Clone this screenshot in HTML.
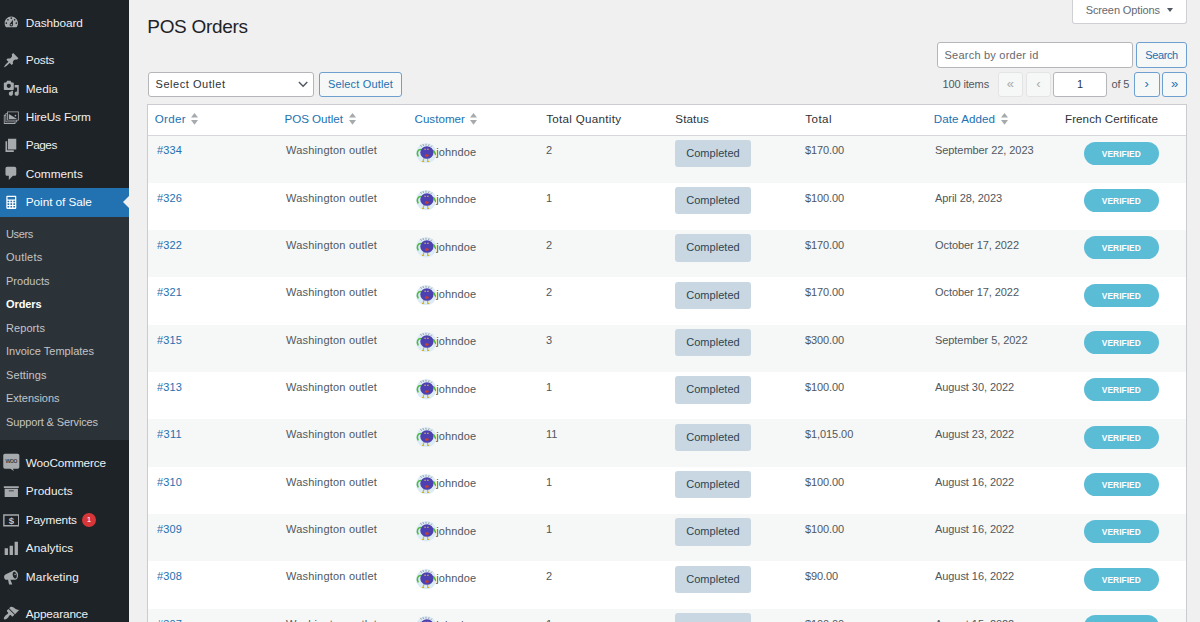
<!DOCTYPE html>
<html lang="en">
<head>
<meta charset="utf-8">
<title>POS Orders</title>
<style>
*{box-sizing:border-box;margin:0;padding:0}
html,body{width:1200px;height:622px;overflow:hidden}
body{background:#f0f0f1;font-family:"Liberation Sans",sans-serif;color:#3c434a;font-size:11px;position:relative}
a{text-decoration:none}
/* sidebar */
#side{position:absolute;left:0;top:0;width:129px;height:622px;background:#1d2327}
.mi{position:absolute;left:0;width:129px;height:28px;color:#f0f0f1;line-height:28px;white-space:nowrap}
.mi span{position:absolute;left:25.8px;top:.2px}
.mi svg{position:absolute;left:3.2px;top:5.8px;width:16.6px;height:16.6px;fill:#a7aaad}
.mi.act{background:#2271b1;color:#fff;height:28.8px}
.mi.act svg{fill:#fff}
.mi.act:after{content:"";position:absolute;right:0;top:8.1px;border:6.9px solid transparent;border-right-color:#f0f0f1;border-left-width:0}
#sub{position:absolute;left:0;top:216.5px;width:129px;height:223.5px;background:#2c3338}
.si{position:absolute;left:6px;color:#c3c4c7;line-height:14px;white-space:nowrap}
.si.cur{color:#fff;font-weight:bold}
.badge{position:absolute;left:82px;top:7px;width:14px;height:14px;border-radius:7px;background:#d63638;color:#fff;font-size:8px;font-weight:normal;line-height:14px;text-align:center}
/* content header */
h1{position:absolute;left:147.3px;top:13.9px;font-size:19px;font-weight:normal;color:#1d2327;line-height:26px;white-space:nowrap}
#scr{position:absolute;left:1072px;top:-1px;width:115px;height:24.5px;background:#fff;border:1px solid #cfd0d4;border-top:none;border-radius:0 0 3px 3px;color:#646970;font-size:11px;line-height:22.4px;white-space:nowrap}
#scr span{position:absolute;left:12.7px;top:0}
#scr i{position:absolute;left:93.6px;top:9px;border:3.5px solid transparent;border-top:4.8px solid #50575e;border-bottom:0}
.inp{position:absolute;background:#fff;border:1px solid #b4b6ba;border-radius:3px;font-size:11px;color:#2c3338;white-space:nowrap}
.btn{position:absolute;background:#f6f7f7;border:1px solid #6da0cf;border-radius:3px;color:#2271b1;font-size:11px;text-align:center;white-space:nowrap}
.lbl{position:absolute;font-size:11px;line-height:25px;color:#50575e;white-space:nowrap}
.pg{position:absolute;top:72px;height:25px;border-radius:3px;font-size:13px;text-align:center;line-height:21px}
.pg.dis{background:#f6f7f7;border:1px solid #e4e4e6;color:#a7aaad}
.pg.en{background:#f6f7f7;border:1px solid #6da0cf;color:#2271b1}
/* table */
#tbl{position:absolute;left:147.2px;top:104px;width:1039.8px;height:540px;background:#fff;border:1px solid #cbccd0;box-shadow:0 1px 1px rgba(0,0,0,.04)}
#thead{position:absolute;left:0;top:0;width:1037.8px;height:31px;border-bottom:1px solid #d6d7da;z-index:2}
.th{position:absolute;top:.4px;line-height:28px;color:#2c3338;white-space:nowrap}
.th.s{color:#2271b1}
.sa{position:absolute;top:8.4px;fill:#a7aaad}
.row{position:absolute;left:0;width:1037.8px;height:47.4px}
.row.alt{background:#f6f7f7}
.c{position:absolute;top:7px;line-height:16px;white-space:nowrap;color:#50575e}
.c.o{color:#2271b1}
.av{position:absolute;top:7.4px;width:20.4px;height:20.4px}
.av svg{display:block;width:20.4px;height:20.4px}
.st{position:absolute;top:4.3px;width:76px;height:27.3px;border-radius:3px;background:#c8d7e1;color:#2e4453;font-size:11px;line-height:27px;text-align:center;white-space:nowrap}
.vf{position:absolute;top:6.4px;width:75.3px;height:23.1px;border-radius:12px;background:#5bbcd6;color:#fff;font-size:8.4px;font-weight:bold;line-height:24.4px;text-align:center;letter-spacing:.05px;white-space:nowrap}
</style>
</head>
<body>
<div id="side">
<div class="mi" style="top:8.4px"><svg viewBox="0 0 20 20"><path d="M3.76 16h12.48c1.1-1.37 1.76-3.11 1.76-5 0-4.42-3.58-8-8-8s-8 3.58-8 8c0 1.89.66 3.63 1.76 5zM10 4c.55 0 1 .45 1 1s-.45 1-1 1-1-.45-1-1 .45-1 1-1zM6 6c.55 0 1 .45 1 1s-.45 1-1 1-1-.45-1-1 .45-1 1-1zm8 0c.55 0 1 .45 1 1s-.45 1-1 1-1-.45-1-1 .45-1 1-1zm-5.37 5.55L12 7v6c0 1.1-.9 2-2 2s-2-.9-2-2c0-.57.24-1.08.63-1.45zM4 10c.55 0 1 .45 1 1s-.45 1-1 1-1-.45-1-1 .45-1 1-1zm12 0c.55 0 1 .45 1 1s-.45 1-1 1-1-.45-1-1 .45-1 1-1zm-5 3c0-.55-.45-1-1-1s-1 .45-1 1 .45 1 1 1 1-.45 1-1z"/></svg><span style="font-size:11.8px;letter-spacing:-0.081px">Dashboard</span></div>
<div class="mi" style="top:46.3px"><svg viewBox="0 0 20 20"><path d="M10.44 3.02l1.82-1.82 6.36 6.35-1.83 1.82c-1.05-.68-2.48-.57-3.41.36l-.75.75c-.92.93-1.04 2.35-.35 3.41l-1.83 1.82-2.41-2.41-2.8 2.79c-.42.42-3.38 2.71-3.8 2.29s1.86-3.39 2.28-3.81l2.79-2.79L4.1 9.36l1.83-1.82c1.05.69 2.48.57 3.4-.36l.75-.75c.93-.92 1.05-2.35.36-3.41z"/></svg><span style="font-size:11.8px;letter-spacing:-0.202px">Posts</span></div>
<div class="mi" style="top:74.6px"><svg viewBox="0 0 20 20"><path d="M13 11V4c0-.55-.45-1-1-1h-1.67L9 1H5L3.67 3H2c-.55 0-1 .45-1 1v7c0 .55.45 1 1 1h10c.55 0 1-.45 1-1zM7 4.5c1.38 0 2.5 1.12 2.5 2.5S8.38 9.5 7 9.5 4.5 8.38 4.5 7 5.62 4.5 7 4.5zM14 6h5v10.5c0 1.38-1.12 2.5-2.5 2.5S14 17.88 14 16.5s1.12-2.5 2.5-2.5c.17 0 .34.02.5.05V9h-3V6zm-4 8.05V13h2v3.5c0 1.38-1.12 2.5-2.5 2.5S7 17.88 7 16.5 8.12 14 9.5 14c.17 0 .34.02.5.05z"/></svg><span style="font-size:11.8px;letter-spacing:-0.028px">Media</span></div>
<div class="mi" style="top:102.9px"><svg viewBox="0 0 20 20"><path d="M5 3h14v11h-2v2h-2v2H1V7h2V5h2V3zm13 10V4H6v9h12zm-3-4c-.55 0-1-.45-1-1s.45-1 1-1 1 .45 1 1-.45 1-1 1zm1 6v-1H5V6H4v9h12zM7 6l10 6H7V6zm7 11v-1H3V8H2v9h12z"/></svg><span style="font-size:11.8px;letter-spacing:-0.170px">HireUs Form</span></div>
<div class="mi" style="top:131.3px"><svg viewBox="0 0 20 20"><path d="M6 15V2h10v13H6zm-1 1h8v2H3V5h2v11z"/></svg><span style="font-size:11.8px;letter-spacing:-0.492px">Pages</span></div>
<div class="mi" style="top:159.6px"><svg viewBox="0 0 20 20"><path d="M5 2h9c1.1 0 2 .9 2 2v7c0 1.1-.9 2-2 2h-2l-5 5v-5H5c-1.1 0-2-.9-2-2V4c0-1.1.9-2 2-2z"/></svg><span style="font-size:11.8px;letter-spacing:-0.006px">Comments</span></div>
<div class="mi act" style="top:187.8px"><svg viewBox="0 0 20 20"><path fill-rule="evenodd" d="M5 2h10a1 1 0 0 1 1 1v14a1 1 0 0 1-1 1H5a1 1 0 0 1-1-1V3a1 1 0 0 1 1-1zM5.5 3.5v3h9v-3zM5.5 8v2h2V8zM9 8v2h2V8zM12.5 8v2h2V8zM5.500 11.200v2h2v-2zM9 11.200v2h2v-2zM12.500 11.200v2h2v-2zM5.500 14.400v2h2v-2zM9 14.400v2h2v-2zM12.500 14.400v2h2v-2z"/></svg><span style="font-size:11.8px;letter-spacing:-0.070px">Point of Sale</span></div>
<div class="mi" style="top:448.8px"><svg viewBox="0 0 20 20" style="top:4.300px;overflow:visible"><path d="M2.300.800h15.400a2 2 0 0 1 2 2v14.200a2 2 0 0 1-2 2H12l1.200 2.600-4.300-2.600H2.300a2 2 0 0 1-2-2V2.800a2 2 0 0 1 2-2z"/><text x="10" y="12.600" text-anchor="middle" font-family="Liberation Sans" font-size="8.400" fill="#1d2327" letter-spacing="-.45">woo</text></svg><span style="font-size:11.8px;letter-spacing:-0.141px">WooCommerce</span></div>
<div class="mi" style="top:477.2px"><svg viewBox="0 0 20 20"><path d="M19 4v2H1V4h18zM2 7h16v10H2V7zm11 3V9H7v1h6z"/></svg><span style="font-size:11.8px;letter-spacing:0.054px">Products</span></div>
<div class="mi" style="top:505.6px"><svg viewBox="0 0 20 20" style="top:6.300px;left:2.800px"><path fill-rule="evenodd" d="M.200 2.700h19.600v14.800H.200zM1.900 4.400v11.400h16.200V4.400z"/><text x="10" y="14.200" text-anchor="middle" font-family="Liberation Sans" font-weight="bold" font-size="11.500" fill="#c3c5c7">$</text></svg><span style="font-size:11.8px;letter-spacing:-0.183px">Payments</span><b class="badge">1</b></div>
<div class="mi" style="top:534.0px"><svg viewBox="0 0 20 20"><path d="M18 18V2h-4v16h4zm-6 0V7H8v11h4zm-6 0v-8H2v8h4z"/></svg><span style="font-size:11.8px;letter-spacing:0.031px">Analytics</span></div>
<div class="mi" style="top:562.4px"><svg viewBox="0 0 20 20" style="top:6.400px"><path fill-rule="evenodd" d="M13.500 1.600c2.500 0 4.700 2.800 4.700 6s-1.600 5.500-3.800 5.500H8.900l2.300 5.700H7.300l-1.200-5.700H4.300c-1.600 0-3-1.600-3-3.600 0-1.400.600-2.500 1.600-3l9.300-4.400c.600-.3 1.300-.5 1.300-.5zM13.300 3.200c-1.300.300-1.900 2.400-1.500 4.600.500 2.400 2 4 3.300 3.700 1.300-.3 1.900-2.400 1.400-4.600-.4-2.300-1.900-4-3.200-3.700zM13.600 5.900l1.500-.4.400 1.600-1.500.4z"/></svg><span style="font-size:11.8px;letter-spacing:0.154px">Marketing</span></div>
<div class="mi" style="top:599.6px"><svg viewBox="0 0 20 20"><path d="M14.480 11.060L7.410 3.990l1.500-1.500c.5-.56 2.300-.47 3.510.32 1.210.8 1.430 1.280 2.910 2.100 1.180.64 2.450 1.260 4.450.85zm-.71.71L6.700 4.700 4.930 6.470c-.39.39-.39 1.020 0 1.410l1.060 1.060c.39.39.39 1.030 0 1.420-.6.6-1.430 1.110-2.210 1.690-.35.26-.7.530-1.010.84C1.430 14.230.4 16.080 1.400 17.070c.99 1 2.840-.03 4.180-1.360.31-.31.58-.66.850-1.020.57-.78 1.080-1.610 1.690-2.210.39-.39 1.020-.39 1.410 0l1.060 1.060c.39.39 1.020.39 1.410 0z"/></svg><span style="font-size:11.8px;letter-spacing:-0.144px">Appearance</span></div>
<div id="sub">
<a class="si" style="top:10.0px;font-size:11px;letter-spacing:-0.345px">Users</a>
<a class="si" style="top:33.5px;font-size:11px;letter-spacing:0.236px">Outlets</a>
<a class="si" style="top:57.0px;font-size:11px;letter-spacing:0.011px">Products</a>
<a class="si cur" style="top:80.5px;font-size:11px;letter-spacing:-0.095px">Orders</a>
<a class="si" style="top:104.0px;font-size:11px;letter-spacing:0.069px">Reports</a>
<a class="si" style="top:127.5px;font-size:11px;letter-spacing:0.009px">Invoice Templates</a>
<a class="si" style="top:151.0px;font-size:11px;letter-spacing:0.094px">Settings</a>
<a class="si" style="top:174.5px;font-size:11px;letter-spacing:-0.031px">Extensions</a>
<a class="si" style="top:198.0px;font-size:11px;letter-spacing:-0.120px">Support &amp; Services</a>
</div>
</div>
<div id="main">
<h1 style="letter-spacing:-0.317px">POS Orders</h1>
<div id="scr"><span style="letter-spacing:-0.108px">Screen Options</span><i></i></div>
<div class="inp" style="left:937px;top:42px;width:195.5px;height:25.5px;line-height:25.2px;color:#646970"><span style="position:absolute;left:6.5px;letter-spacing:0.229px">Search by order id</span></div>
<div class="btn" style="left:1136px;top:42px;width:51px;height:25.5px;line-height:24px"><span style="letter-spacing:-0.426px">Search</span></div>
<div class="inp" style="left:148px;top:72px;width:165.900px;height:24.700px;line-height:23.300px"><span style="position:absolute;left:6.5px;letter-spacing:0.540px">Select Outlet</span><svg style="position:absolute;left:148.600px;top:7.900px" width="10" height="7" viewBox="0 0 10 7"><path d="M.900 1 L5.100 5.300 L9.300 1" fill="none" stroke="#50575e" stroke-width="1.400"/></svg></div>
<div class="btn" style="left:319px;top:72px;width:83px;height:24.5px;line-height:22px"><span style="letter-spacing:0.156px">Select Outlet</span></div>
<span class="lbl" style="left:942.5px;top:72px;letter-spacing:-0.132px">100 items</span>
<span class="pg dis" style="left:998.2px;width:24.6px">&laquo;</span>
<span class="pg dis" style="left:1026.3px;width:24.3px">&lsaquo;</span>
<div class="inp" style="left:1053px;top:72px;width:54px;height:25px;line-height:23px;text-align:center">1</div>
<span class="lbl" style="left:1111.5px;top:72px;letter-spacing:-0.137px">of 5</span>
<span class="pg en" style="left:1134px;width:25.5px">&rsaquo;</span>
<span class="pg en" style="left:1162px;width:25px">&raquo;</span>
<div id="tbl">
<div id="thead">
<span class="th s" style="left:6.6px;font-size:11.6px;letter-spacing:0.310px;">Order</span><svg class="sa" style="left:42.5px" width="7" height="12" viewBox="0 0 7 12"><path d="M3.5 0 L7 4.6 L0 4.6Z M0 7.1 L7 7.1 L3.5 11.7Z"/></svg>
<span class="th s" style="left:136.3px;font-size:11.6px;letter-spacing:-0.017px;">POS Outlet</span><svg class="sa" style="left:200.8px" width="7" height="12" viewBox="0 0 7 12"><path d="M3.5 0 L7 4.6 L0 4.6Z M0 7.1 L7 7.1 L3.5 11.7Z"/></svg>
<span class="th s" style="left:266.3px;font-size:11.6px;letter-spacing:0.027px;">Customer</span><svg class="sa" style="left:321.8px" width="7" height="12" viewBox="0 0 7 12"><path d="M3.5 0 L7 4.6 L0 4.6Z M0 7.1 L7 7.1 L3.5 11.7Z"/></svg>
<span class="th" style="left:398.1px;font-size:11.6px;letter-spacing:0.291px;">Total Quantity</span>
<span class="th" style="left:527.1px;font-size:11.6px;letter-spacing:0.136px;">Status</span>
<span class="th" style="left:657.1px;font-size:11.6px;letter-spacing:0.439px;">Total</span>
<span class="th s" style="left:785.6px;font-size:11.6px;letter-spacing:0.057px;">Date Added</span><svg class="sa" style="left:852.5px" width="7" height="12" viewBox="0 0 7 12"><path d="M3.5 0 L7 4.6 L0 4.6Z M0 7.1 L7 7.1 L3.5 11.7Z"/></svg>
<span class="th" style="left:916.8px;font-size:11.6px;letter-spacing:0.081px;">French Certificate</span>
</div>
<div class="row alt" style="top:30.3px"><span class="c o" style="left:8.8px;font-size:11px;letter-spacing:0.132px;">#334</span><span class="c" style="left:137.8px;font-size:11px;letter-spacing:0.197px;">Washington outlet</span><span class="av" style="left:267.5px"><svg viewBox="0 0 20 20"><circle cx="10" cy="10" r="10" fill="#dcecf6"/><path d="M4.400 6.400C1.400 6.600.600 9.800 2 12.600" fill="none" stroke="#4cba3c" stroke-width="1.500" stroke-linecap="round"/><path d="M17 7.600c1.800.4.800 3 2.600 3.600" fill="none" stroke="#4cba3c" stroke-width="1.500" stroke-linecap="round"/><path d="M7.600 15l-.6 3M11.200 15l.5 3" stroke="#d0b42c" stroke-width="1.200" fill="none"/><path d="M5.800 18.100h2.200M10.800 18.100h2.200" stroke="#d0b42c" stroke-width="1" fill="none"/><path d="M5.500 3.600L4.300 1.800M7.400 2.900L6.800 1M9.800 2.600V.800M12.200 2.900l.7-1.700M14.400 3.900l1.300-1.400" stroke="#666" stroke-width=".55" fill="none"/><ellipse cx="10.700" cy="9.300" rx="6.500" ry="6.200" fill="#4d40b0"/><rect x="8.200" y="5.600" width="1.500" height="1.100" fill="#cdb95c"/><rect x="10.900" y="5.600" width="1.500" height="1.100" fill="#cdb95c"/><ellipse cx="10.600" cy="12.200" rx="1.800" ry="1.200" fill="#c8402c"/></svg></span><span class="c" style="left:288.1px;font-size:11px;letter-spacing:0.121px;top:8.8px;">johndoe</span><span class="c" style="left:397.8px;font-size:11px;letter-spacing:-0.418px;">2</span><span class="st" style="left:526.8px;letter-spacing:0.034px">Completed</span><span class="c" style="left:656.8px;font-size:11px;letter-spacing:-0.085px;">$170.00</span><span class="c" style="left:786.8px;font-size:11px;letter-spacing:-0.066px;">September 22, 2023</span><span class="vf" style="left:935.5px">VERIFIED</span></div>
<div class="row" style="top:77.7px"><span class="c o" style="left:8.8px;font-size:11px;letter-spacing:0.132px;">#326</span><span class="c" style="left:137.8px;font-size:11px;letter-spacing:0.197px;">Washington outlet</span><span class="av" style="left:267.5px"><svg viewBox="0 0 20 20"><circle cx="10" cy="10" r="10" fill="#dcecf6"/><path d="M4.400 6.400C1.400 6.600.600 9.800 2 12.600" fill="none" stroke="#4cba3c" stroke-width="1.500" stroke-linecap="round"/><path d="M17 7.600c1.800.4.800 3 2.600 3.600" fill="none" stroke="#4cba3c" stroke-width="1.500" stroke-linecap="round"/><path d="M7.600 15l-.6 3M11.200 15l.5 3" stroke="#d0b42c" stroke-width="1.200" fill="none"/><path d="M5.800 18.100h2.200M10.800 18.100h2.200" stroke="#d0b42c" stroke-width="1" fill="none"/><path d="M5.500 3.600L4.300 1.800M7.400 2.900L6.800 1M9.800 2.600V.800M12.200 2.900l.7-1.700M14.400 3.900l1.300-1.400" stroke="#666" stroke-width=".55" fill="none"/><ellipse cx="10.700" cy="9.300" rx="6.500" ry="6.200" fill="#4d40b0"/><rect x="8.200" y="5.600" width="1.500" height="1.100" fill="#cdb95c"/><rect x="10.900" y="5.600" width="1.500" height="1.100" fill="#cdb95c"/><ellipse cx="10.600" cy="12.200" rx="1.800" ry="1.200" fill="#c8402c"/></svg></span><span class="c" style="left:288.1px;font-size:11px;letter-spacing:0.121px;top:8.8px;">johndoe</span><span class="c" style="left:397.8px;font-size:11px;letter-spacing:-0.418px;">1</span><span class="st" style="left:526.8px;letter-spacing:0.034px">Completed</span><span class="c" style="left:656.8px;font-size:11px;letter-spacing:-0.085px;">$100.00</span><span class="c" style="left:786.8px;font-size:11px;letter-spacing:-0.058px;">April 28, 2023</span><span class="vf" style="left:935.5px">VERIFIED</span></div>
<div class="row alt" style="top:125.0px"><span class="c o" style="left:8.8px;font-size:11px;letter-spacing:0.132px;">#322</span><span class="c" style="left:137.8px;font-size:11px;letter-spacing:0.197px;">Washington outlet</span><span class="av" style="left:267.5px"><svg viewBox="0 0 20 20"><circle cx="10" cy="10" r="10" fill="#dcecf6"/><path d="M4.400 6.400C1.400 6.600.600 9.800 2 12.600" fill="none" stroke="#4cba3c" stroke-width="1.500" stroke-linecap="round"/><path d="M17 7.600c1.800.4.800 3 2.600 3.600" fill="none" stroke="#4cba3c" stroke-width="1.500" stroke-linecap="round"/><path d="M7.600 15l-.6 3M11.200 15l.5 3" stroke="#d0b42c" stroke-width="1.200" fill="none"/><path d="M5.800 18.100h2.200M10.800 18.100h2.200" stroke="#d0b42c" stroke-width="1" fill="none"/><path d="M5.500 3.600L4.300 1.800M7.400 2.900L6.800 1M9.800 2.600V.800M12.200 2.900l.7-1.700M14.400 3.900l1.300-1.400" stroke="#666" stroke-width=".55" fill="none"/><ellipse cx="10.700" cy="9.300" rx="6.500" ry="6.200" fill="#4d40b0"/><rect x="8.200" y="5.600" width="1.500" height="1.100" fill="#cdb95c"/><rect x="10.900" y="5.600" width="1.500" height="1.100" fill="#cdb95c"/><ellipse cx="10.600" cy="12.200" rx="1.800" ry="1.200" fill="#c8402c"/></svg></span><span class="c" style="left:288.1px;font-size:11px;letter-spacing:0.121px;top:8.8px;">johndoe</span><span class="c" style="left:397.8px;font-size:11px;letter-spacing:-0.418px;">2</span><span class="st" style="left:526.8px;letter-spacing:0.034px">Completed</span><span class="c" style="left:656.8px;font-size:11px;letter-spacing:-0.085px;">$170.00</span><span class="c" style="left:786.8px;font-size:11px;letter-spacing:-0.064px;">October 17, 2022</span><span class="vf" style="left:935.5px">VERIFIED</span></div>
<div class="row" style="top:172.3px"><span class="c o" style="left:8.8px;font-size:11px;letter-spacing:0.132px;">#321</span><span class="c" style="left:137.8px;font-size:11px;letter-spacing:0.197px;">Washington outlet</span><span class="av" style="left:267.5px"><svg viewBox="0 0 20 20"><circle cx="10" cy="10" r="10" fill="#dcecf6"/><path d="M4.400 6.400C1.400 6.600.600 9.800 2 12.600" fill="none" stroke="#4cba3c" stroke-width="1.500" stroke-linecap="round"/><path d="M17 7.600c1.800.4.800 3 2.600 3.600" fill="none" stroke="#4cba3c" stroke-width="1.500" stroke-linecap="round"/><path d="M7.600 15l-.6 3M11.200 15l.5 3" stroke="#d0b42c" stroke-width="1.200" fill="none"/><path d="M5.800 18.100h2.200M10.800 18.100h2.200" stroke="#d0b42c" stroke-width="1" fill="none"/><path d="M5.500 3.600L4.300 1.800M7.400 2.900L6.800 1M9.800 2.600V.800M12.200 2.900l.7-1.700M14.400 3.900l1.300-1.400" stroke="#666" stroke-width=".55" fill="none"/><ellipse cx="10.700" cy="9.300" rx="6.500" ry="6.200" fill="#4d40b0"/><rect x="8.200" y="5.600" width="1.500" height="1.100" fill="#cdb95c"/><rect x="10.900" y="5.600" width="1.500" height="1.100" fill="#cdb95c"/><ellipse cx="10.600" cy="12.200" rx="1.800" ry="1.200" fill="#c8402c"/></svg></span><span class="c" style="left:288.1px;font-size:11px;letter-spacing:0.121px;top:8.8px;">johndoe</span><span class="c" style="left:397.8px;font-size:11px;letter-spacing:-0.418px;">2</span><span class="st" style="left:526.8px;letter-spacing:0.034px">Completed</span><span class="c" style="left:656.8px;font-size:11px;letter-spacing:-0.085px;">$170.00</span><span class="c" style="left:786.8px;font-size:11px;letter-spacing:-0.064px;">October 17, 2022</span><span class="vf" style="left:935.5px">VERIFIED</span></div>
<div class="row alt" style="top:219.7px"><span class="c o" style="left:8.8px;font-size:11px;letter-spacing:0.132px;">#315</span><span class="c" style="left:137.8px;font-size:11px;letter-spacing:0.197px;">Washington outlet</span><span class="av" style="left:267.5px"><svg viewBox="0 0 20 20"><circle cx="10" cy="10" r="10" fill="#dcecf6"/><path d="M4.400 6.400C1.400 6.600.600 9.800 2 12.600" fill="none" stroke="#4cba3c" stroke-width="1.500" stroke-linecap="round"/><path d="M17 7.600c1.800.4.800 3 2.600 3.600" fill="none" stroke="#4cba3c" stroke-width="1.500" stroke-linecap="round"/><path d="M7.600 15l-.6 3M11.200 15l.5 3" stroke="#d0b42c" stroke-width="1.200" fill="none"/><path d="M5.800 18.100h2.200M10.800 18.100h2.200" stroke="#d0b42c" stroke-width="1" fill="none"/><path d="M5.500 3.600L4.300 1.800M7.400 2.900L6.800 1M9.800 2.600V.800M12.200 2.900l.7-1.700M14.400 3.900l1.300-1.400" stroke="#666" stroke-width=".55" fill="none"/><ellipse cx="10.700" cy="9.300" rx="6.500" ry="6.200" fill="#4d40b0"/><rect x="8.200" y="5.600" width="1.500" height="1.100" fill="#cdb95c"/><rect x="10.900" y="5.600" width="1.500" height="1.100" fill="#cdb95c"/><ellipse cx="10.600" cy="12.200" rx="1.800" ry="1.200" fill="#c8402c"/></svg></span><span class="c" style="left:288.1px;font-size:11px;letter-spacing:0.121px;top:8.8px;">johndoe</span><span class="c" style="left:397.8px;font-size:11px;letter-spacing:-0.418px;">3</span><span class="st" style="left:526.8px;letter-spacing:0.034px">Completed</span><span class="c" style="left:656.8px;font-size:11px;letter-spacing:-0.085px;">$300.00</span><span class="c" style="left:786.8px;font-size:11px;letter-spacing:-0.066px;">September 5, 2022</span><span class="vf" style="left:935.5px">VERIFIED</span></div>
<div class="row" style="top:267.0px"><span class="c o" style="left:8.8px;font-size:11px;letter-spacing:0.132px;">#313</span><span class="c" style="left:137.8px;font-size:11px;letter-spacing:0.197px;">Washington outlet</span><span class="av" style="left:267.5px"><svg viewBox="0 0 20 20"><circle cx="10" cy="10" r="10" fill="#dcecf6"/><path d="M4.400 6.400C1.400 6.600.600 9.800 2 12.600" fill="none" stroke="#4cba3c" stroke-width="1.500" stroke-linecap="round"/><path d="M17 7.600c1.800.4.800 3 2.600 3.600" fill="none" stroke="#4cba3c" stroke-width="1.500" stroke-linecap="round"/><path d="M7.600 15l-.6 3M11.200 15l.5 3" stroke="#d0b42c" stroke-width="1.200" fill="none"/><path d="M5.800 18.100h2.200M10.800 18.100h2.200" stroke="#d0b42c" stroke-width="1" fill="none"/><path d="M5.500 3.600L4.300 1.800M7.400 2.900L6.800 1M9.800 2.600V.800M12.200 2.900l.7-1.700M14.400 3.900l1.300-1.400" stroke="#666" stroke-width=".55" fill="none"/><ellipse cx="10.700" cy="9.300" rx="6.500" ry="6.200" fill="#4d40b0"/><rect x="8.200" y="5.600" width="1.500" height="1.100" fill="#cdb95c"/><rect x="10.900" y="5.600" width="1.500" height="1.100" fill="#cdb95c"/><ellipse cx="10.600" cy="12.200" rx="1.800" ry="1.200" fill="#c8402c"/></svg></span><span class="c" style="left:288.1px;font-size:11px;letter-spacing:0.121px;top:8.8px;">johndoe</span><span class="c" style="left:397.8px;font-size:11px;letter-spacing:-0.418px;">1</span><span class="st" style="left:526.8px;letter-spacing:0.034px">Completed</span><span class="c" style="left:656.8px;font-size:11px;letter-spacing:-0.085px;">$100.00</span><span class="c" style="left:786.8px;font-size:11px;letter-spacing:-0.064px;">August 30, 2022</span><span class="vf" style="left:935.5px">VERIFIED</span></div>
<div class="row alt" style="top:314.3px"><span class="c o" style="left:8.8px;font-size:11px;letter-spacing:0.336px;">#311</span><span class="c" style="left:137.8px;font-size:11px;letter-spacing:0.197px;">Washington outlet</span><span class="av" style="left:267.5px"><svg viewBox="0 0 20 20"><circle cx="10" cy="10" r="10" fill="#dcecf6"/><path d="M4.400 6.400C1.400 6.600.600 9.800 2 12.600" fill="none" stroke="#4cba3c" stroke-width="1.500" stroke-linecap="round"/><path d="M17 7.600c1.800.4.800 3 2.600 3.600" fill="none" stroke="#4cba3c" stroke-width="1.500" stroke-linecap="round"/><path d="M7.600 15l-.6 3M11.200 15l.5 3" stroke="#d0b42c" stroke-width="1.200" fill="none"/><path d="M5.800 18.100h2.200M10.800 18.100h2.200" stroke="#d0b42c" stroke-width="1" fill="none"/><path d="M5.500 3.600L4.300 1.800M7.400 2.900L6.800 1M9.800 2.600V.800M12.200 2.900l.7-1.700M14.400 3.900l1.300-1.400" stroke="#666" stroke-width=".55" fill="none"/><ellipse cx="10.700" cy="9.300" rx="6.500" ry="6.200" fill="#4d40b0"/><rect x="8.200" y="5.600" width="1.500" height="1.100" fill="#cdb95c"/><rect x="10.900" y="5.600" width="1.500" height="1.100" fill="#cdb95c"/><ellipse cx="10.600" cy="12.200" rx="1.800" ry="1.200" fill="#c8402c"/></svg></span><span class="c" style="left:288.1px;font-size:11px;letter-spacing:0.121px;top:8.8px;">johndoe</span><span class="c" style="left:397.8px;font-size:11px;letter-spacing:-0.010px;">11</span><span class="st" style="left:526.8px;letter-spacing:0.034px">Completed</span><span class="c" style="left:656.8px;font-size:11px;letter-spacing:-0.082px;">$1,015.00</span><span class="c" style="left:786.8px;font-size:11px;letter-spacing:-0.064px;">August 23, 2022</span><span class="vf" style="left:935.5px">VERIFIED</span></div>
<div class="row" style="top:361.7px"><span class="c o" style="left:8.8px;font-size:11px;letter-spacing:0.132px;">#310</span><span class="c" style="left:137.8px;font-size:11px;letter-spacing:0.197px;">Washington outlet</span><span class="av" style="left:267.5px"><svg viewBox="0 0 20 20"><circle cx="10" cy="10" r="10" fill="#dcecf6"/><path d="M4.400 6.400C1.400 6.600.600 9.800 2 12.600" fill="none" stroke="#4cba3c" stroke-width="1.500" stroke-linecap="round"/><path d="M17 7.600c1.800.4.800 3 2.600 3.600" fill="none" stroke="#4cba3c" stroke-width="1.500" stroke-linecap="round"/><path d="M7.600 15l-.6 3M11.200 15l.5 3" stroke="#d0b42c" stroke-width="1.200" fill="none"/><path d="M5.800 18.100h2.200M10.800 18.100h2.200" stroke="#d0b42c" stroke-width="1" fill="none"/><path d="M5.500 3.600L4.300 1.800M7.400 2.900L6.800 1M9.800 2.600V.800M12.200 2.900l.7-1.700M14.400 3.900l1.300-1.400" stroke="#666" stroke-width=".55" fill="none"/><ellipse cx="10.700" cy="9.300" rx="6.500" ry="6.200" fill="#4d40b0"/><rect x="8.200" y="5.600" width="1.500" height="1.100" fill="#cdb95c"/><rect x="10.900" y="5.600" width="1.500" height="1.100" fill="#cdb95c"/><ellipse cx="10.600" cy="12.200" rx="1.800" ry="1.200" fill="#c8402c"/></svg></span><span class="c" style="left:288.1px;font-size:11px;letter-spacing:0.121px;top:8.8px;">johndoe</span><span class="c" style="left:397.8px;font-size:11px;letter-spacing:-0.418px;">1</span><span class="st" style="left:526.8px;letter-spacing:0.034px">Completed</span><span class="c" style="left:656.8px;font-size:11px;letter-spacing:-0.085px;">$100.00</span><span class="c" style="left:786.8px;font-size:11px;letter-spacing:-0.064px;">August 16, 2022</span><span class="vf" style="left:935.5px">VERIFIED</span></div>
<div class="row alt" style="top:409.0px"><span class="c o" style="left:8.8px;font-size:11px;letter-spacing:0.132px;">#309</span><span class="c" style="left:137.8px;font-size:11px;letter-spacing:0.197px;">Washington outlet</span><span class="av" style="left:267.5px"><svg viewBox="0 0 20 20"><circle cx="10" cy="10" r="10" fill="#dcecf6"/><path d="M4.400 6.400C1.400 6.600.600 9.800 2 12.600" fill="none" stroke="#4cba3c" stroke-width="1.500" stroke-linecap="round"/><path d="M17 7.600c1.800.4.800 3 2.600 3.600" fill="none" stroke="#4cba3c" stroke-width="1.500" stroke-linecap="round"/><path d="M7.600 15l-.6 3M11.200 15l.5 3" stroke="#d0b42c" stroke-width="1.200" fill="none"/><path d="M5.800 18.100h2.200M10.800 18.100h2.200" stroke="#d0b42c" stroke-width="1" fill="none"/><path d="M5.500 3.600L4.300 1.800M7.400 2.900L6.800 1M9.800 2.600V.800M12.200 2.900l.7-1.700M14.400 3.900l1.300-1.400" stroke="#666" stroke-width=".55" fill="none"/><ellipse cx="10.700" cy="9.300" rx="6.500" ry="6.200" fill="#4d40b0"/><rect x="8.200" y="5.600" width="1.500" height="1.100" fill="#cdb95c"/><rect x="10.900" y="5.600" width="1.500" height="1.100" fill="#cdb95c"/><ellipse cx="10.600" cy="12.200" rx="1.800" ry="1.200" fill="#c8402c"/></svg></span><span class="c" style="left:288.1px;font-size:11px;letter-spacing:0.121px;top:8.8px;">johndoe</span><span class="c" style="left:397.8px;font-size:11px;letter-spacing:-0.418px;">1</span><span class="st" style="left:526.8px;letter-spacing:0.034px">Completed</span><span class="c" style="left:656.8px;font-size:11px;letter-spacing:-0.085px;">$100.00</span><span class="c" style="left:786.8px;font-size:11px;letter-spacing:-0.064px;">August 16, 2022</span><span class="vf" style="left:935.5px">VERIFIED</span></div>
<div class="row" style="top:456.3px"><span class="c o" style="left:8.8px;font-size:11px;letter-spacing:0.132px;">#308</span><span class="c" style="left:137.8px;font-size:11px;letter-spacing:0.197px;">Washington outlet</span><span class="av" style="left:267.5px"><svg viewBox="0 0 20 20"><circle cx="10" cy="10" r="10" fill="#dcecf6"/><path d="M4.400 6.400C1.400 6.600.600 9.800 2 12.600" fill="none" stroke="#4cba3c" stroke-width="1.500" stroke-linecap="round"/><path d="M17 7.600c1.800.4.800 3 2.600 3.600" fill="none" stroke="#4cba3c" stroke-width="1.500" stroke-linecap="round"/><path d="M7.600 15l-.6 3M11.200 15l.5 3" stroke="#d0b42c" stroke-width="1.200" fill="none"/><path d="M5.800 18.100h2.200M10.800 18.100h2.200" stroke="#d0b42c" stroke-width="1" fill="none"/><path d="M5.500 3.600L4.300 1.800M7.400 2.900L6.800 1M9.800 2.600V.800M12.200 2.900l.7-1.700M14.400 3.900l1.300-1.400" stroke="#666" stroke-width=".55" fill="none"/><ellipse cx="10.700" cy="9.300" rx="6.500" ry="6.200" fill="#4d40b0"/><rect x="8.200" y="5.600" width="1.500" height="1.100" fill="#cdb95c"/><rect x="10.900" y="5.600" width="1.500" height="1.100" fill="#cdb95c"/><ellipse cx="10.600" cy="12.200" rx="1.800" ry="1.200" fill="#c8402c"/></svg></span><span class="c" style="left:288.1px;font-size:11px;letter-spacing:0.121px;top:8.8px;">johndoe</span><span class="c" style="left:397.8px;font-size:11px;letter-spacing:-0.418px;">2</span><span class="st" style="left:526.8px;letter-spacing:0.034px">Completed</span><span class="c" style="left:656.8px;font-size:11px;letter-spacing:-0.084px;">$90.00</span><span class="c" style="left:786.8px;font-size:11px;letter-spacing:-0.064px;">August 16, 2022</span><span class="vf" style="left:935.5px">VERIFIED</span></div>
<div class="row alt" style="top:503.7px"><span class="c o" style="left:8.8px;font-size:11px;letter-spacing:0.132px;">#307</span><span class="c" style="left:137.8px;font-size:11px;letter-spacing:0.197px;">Washington outlet</span><span class="av" style="left:267.5px"><svg viewBox="0 0 20 20"><circle cx="10" cy="10" r="10" fill="#dcecf6"/><path d="M4.400 6.400C1.400 6.600.600 9.800 2 12.600" fill="none" stroke="#4cba3c" stroke-width="1.500" stroke-linecap="round"/><path d="M17 7.600c1.800.4.800 3 2.600 3.600" fill="none" stroke="#4cba3c" stroke-width="1.500" stroke-linecap="round"/><path d="M7.600 15l-.6 3M11.200 15l.5 3" stroke="#d0b42c" stroke-width="1.200" fill="none"/><path d="M5.800 18.100h2.200M10.800 18.100h2.200" stroke="#d0b42c" stroke-width="1" fill="none"/><path d="M5.500 3.600L4.300 1.800M7.400 2.900L6.800 1M9.800 2.600V.800M12.200 2.900l.7-1.700M14.400 3.900l1.300-1.400" stroke="#666" stroke-width=".55" fill="none"/><ellipse cx="10.700" cy="9.300" rx="6.500" ry="6.200" fill="#4d40b0"/><rect x="8.200" y="5.600" width="1.500" height="1.100" fill="#cdb95c"/><rect x="10.900" y="5.600" width="1.500" height="1.100" fill="#cdb95c"/><ellipse cx="10.600" cy="12.200" rx="1.800" ry="1.200" fill="#c8402c"/></svg></span><span class="c" style="left:288.1px;font-size:11px;letter-spacing:0.121px;top:8.8px;">johndoe</span><span class="c" style="left:397.8px;font-size:11px;letter-spacing:-0.418px;">1</span><span class="st" style="left:526.8px;letter-spacing:0.034px">Completed</span><span class="c" style="left:656.8px;font-size:11px;letter-spacing:-0.085px;">$100.00</span><span class="c" style="left:786.8px;font-size:11px;letter-spacing:-0.064px;">August 15, 2022</span><span class="vf" style="left:935.5px">VERIFIED</span></div>
</div>
</div>
</body>
</html>
